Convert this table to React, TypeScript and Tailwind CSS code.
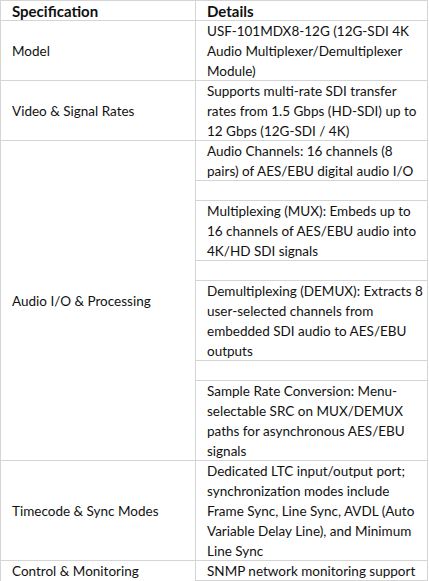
const rows: { label?: string; span?: number; h: string; lines: string[] }[] = [
  {
    label: 'Model',
    h: 'h-[59px]',
    lines: ['USF-101MDX8-12G (12G-SDI 4K', 'Audio Multiplexer/Demultiplexer', 'Module)'],
  },
  {
    label: 'Video & Signal Rates',
    h: 'h-[59px]',
    lines: ['Supports multi-rate SDI transfer', 'rates from 1.5 Gbps (HD-SDI) up to', '12 Gbps (12G-SDI / 4K)'],
  },
  {
    label: 'Audio I/O & Processing',
    span: 7,
    h: 'h-[39px]',
    lines: ['Audio Channels: 16 channels (8', 'pairs) of AES/EBU digital audio I/O'],
  },
  { h: 'h-[19px]', lines: [] },
  {
    h: 'h-[59px]',
    lines: ['Multiplexing (MUX): Embeds up to', '16 channels of AES/EBU audio into', '4K/HD SDI signals'],
  },
  { h: 'h-[19px]', lines: [] },
  {
    h: 'h-[79px]',
    lines: [
      'Demultiplexing (DEMUX): Extracts 8',
      'user-selected channels from',
      'embedded SDI audio to AES/EBU',
      'outputs',
    ],
  },
  { h: 'h-[19px]', lines: [] },
  {
    h: 'h-[79px]',
    lines: [
      'Sample Rate Conversion: Menu-',
      'selectable SRC on MUX/DEMUX',
      'paths for asynchronous AES/EBU',
      'signals',
    ],
  },
  {
    label: 'Timecode & Sync Modes',
    h: 'h-[99px]',
    lines: [
      'Dedicated LTC input/output port;',
      'synchronization modes include',
      'Frame Sync, Line Sync, AVDL (Auto',
      'Variable Delay Line), and Minimum',
      'Line Sync',
    ],
  },
  {
    label: 'Control & Monitoring',
    h: 'h-[19px]',
    lines: ['SNMP network monitoring support'],
  },
]

export default function App() {
  return (
    <div className="w-[429px] h-[581px] bg-white">
      <div className="w-[428px] grid grid-cols-[194px_1fr] gap-px p-px bg-[#d4d4d4] font-['Lato',sans-serif] text-[13.5px] leading-[20px] text-[#111]">
        {/* header */}
        <div className="bg-white h-[19px] pl-[11px] text-[15px] font-bold whitespace-nowrap">Specification</div>
        <div className="bg-white h-[19px] pl-[11px] text-[15px] font-bold whitespace-nowrap">Details</div>

        {rows.map((r, i) => (
          <div key={i} className="contents">
            {r.label && (
              <div
                className={`bg-white pl-[11px] flex items-center whitespace-nowrap ${
                  r.span === 7 ? 'row-span-7' : ''
                }`}
              >
                {r.label}
              </div>
            )}
            <div className={`bg-white pl-[11px] whitespace-nowrap ${r.h}`}>
              {r.lines.map((l, j) => (
                <div key={j}>{l}</div>
              ))}
            </div>
          </div>
        ))}
      </div>
    </div>
  )
}
